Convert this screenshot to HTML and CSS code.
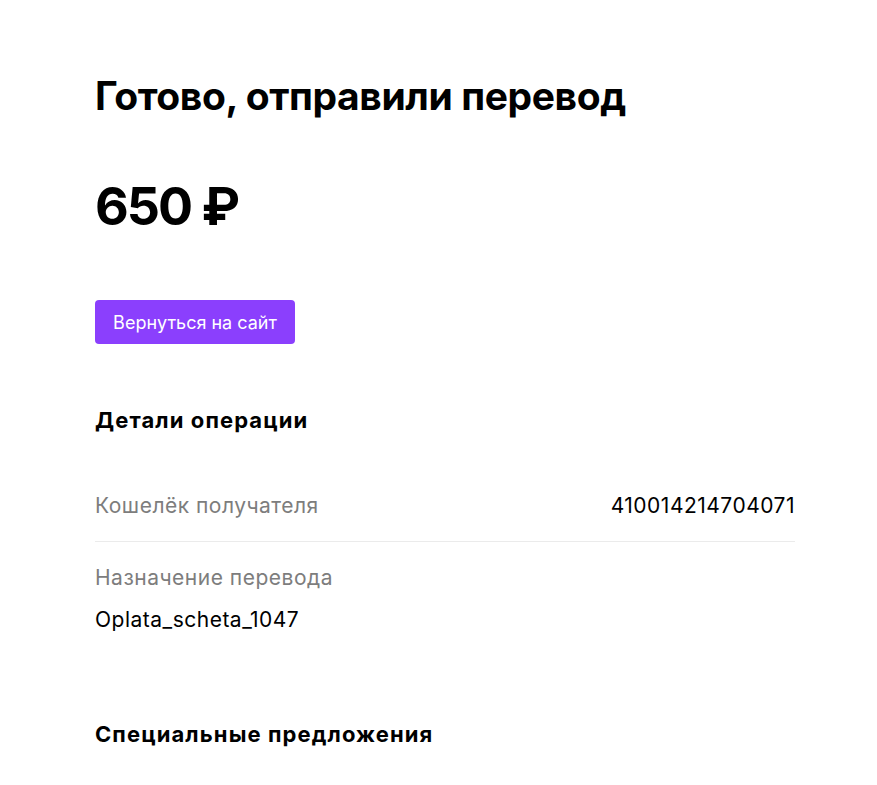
FILE: index.html
```html
<!DOCTYPE html>
<html lang="ru">
<head>
    <meta charset="UTF-8">
    <meta name="viewport" content="width=device-width, initial-scale=1.0">
    <title>Готово, отправили перевод</title>
    <link rel="stylesheet" href="styles.css">
</head>
<body>
    <main class="page">
        <h1 class="title">Готово, отправили перевод</h1>
        <div class="amount">650 ₽</div>
        <button type="button" class="back-button">Вернуться на сайт</button>

        <!-- Детали операции -->
        <h2 class="section-title">Детали операции</h2>
        <div class="details">
            <div class="detail-row">
                <span class="detail-label">Кошелёк получателя</span>
                <span class="detail-value">410014214704071</span>
            </div>
            <div class="detail-row detail-row-stacked">
                <span class="detail-label">Назначение перевода</span>
                <span class="detail-value">Oplata_scheta_1047</span>
            </div>
        </div>

        <h2 class="section-title section-offers">Специальные предложения</h2>
    </main>
</body>
</html>
```

FILE: styles.css
```css
body {
    margin: 0;
    background-color: #fff;
    color: #000;
    font-family: Inter, "Noto Sans", Arial, sans-serif;
}

.page {
    width: 700px;
    padding: 72px 0 40px 95px;
}

.title {
    margin: 0;
    font-size: 39px;
    line-height: 48px;
    font-weight: 700;
    letter-spacing: -0.4px;
}

.amount {
    margin-top: 55px;
    font-size: 52px;
    line-height: 64px;
    font-weight: 700;
    letter-spacing: -2px;
}

.back-button {
    display: block;
    margin-top: 61px;
    height: 44px;
    width: 200px;
    padding: 0;
    border: none;
    border-radius: 4px;
    background-color: #8b3ffd;
    color: #fff;
    font-family: inherit;
    font-size: 18px;
    cursor: pointer;
}

.section-title {
    margin: 62px 0 0;
    font-size: 22px;
    line-height: 28px;
    font-weight: 700;
    letter-spacing: 1.1px;
}

.details {
    margin-top: 38px;
}

.detail-row {
    display: flex;
    justify-content: space-between;
    padding: 20px 0 21px;
    border-bottom: 1px solid #ebebeb;
    font-size: 21px;
    line-height: 28px;
    letter-spacing: 0.5px;
}

.detail-row-stacked {
    flex-direction: column;
    gap: 14px;
    padding-top: 22px;
    border-bottom: none;
}

.detail-label {
    color: #7d7d7d;
}

.section-offers {
    margin-top: 65px;
}
```
